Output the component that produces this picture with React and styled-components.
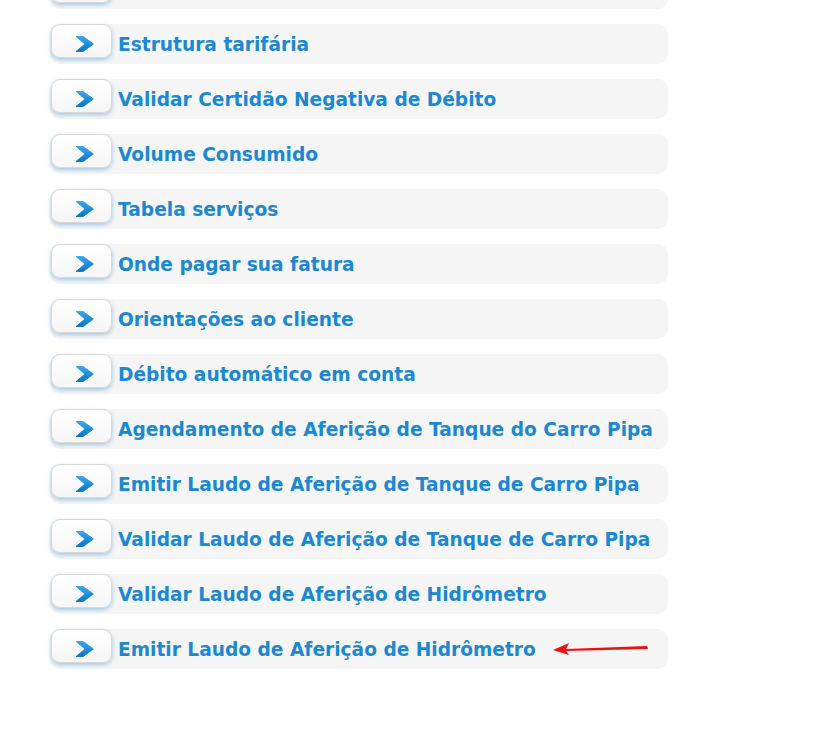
import React from "react";
import styled, { createGlobalStyle } from "styled-components";

const Global = createGlobalStyle`
  html, body { margin: 0; padding: 0; background: #fff; }
  body { font-family: "DejaVu Sans", Verdana, sans-serif; overflow: hidden; }
`;

const Page = styled.div`
  width: 828px;
  height: 743px;
  overflow: hidden;
  background: #fff;
`;

const List = styled.ul`
  list-style: none;
  margin: -31px 0 0 50px;
  padding: 0;
  width: 618px;
  display: flex;
  flex-direction: column;
  gap: 15px;
`;

const Row = styled.li`
  height: 40px;
  background: #f5f5f5;
  border-radius: 10px;
  display: flex;
  align-items: center;
  gap: 6px;
`;

const Btn = styled.span`
  flex: none;
  align-self: flex-start;
  box-sizing: border-box;
  width: 61px;
  height: 34px;
  margin-left: 1px;
  background: linear-gradient(#ffffff, #f6f6f6);
  border: 1px solid #d8d8d8;
  border-radius: 9px;
  box-shadow: 0 2px 4px rgba(110, 170, 215, 0.6);
  display: flex;
  align-items: center;
  justify-content: center;
  padding: 6px 0 0 6px;
`;

const Label = styled.a`
  color: #1a88d2;
  font-weight: bold;
  font-size: 18.6px;
  text-decoration: none;
  white-space: nowrap;
  margin-top: 1px;
`;

const Pointer = styled.svg`
  margin-left: 11px;
  flex: none;
`;

const items = [
  "",
  "Estrutura tarifária",
  "Validar Certidão Negativa de Débito",
  "Volume Consumido",
  "Tabela serviços",
  "Onde pagar sua fatura",
  "Orientações ao cliente",
  "Débito automático em conta",
  "Agendamento de Aferição de Tanque do Carro Pipa",
  "Emitir Laudo de Aferição de Tanque de Carro Pipa",
  "Validar Laudo de Aferição de Tanque de Carro Pipa",
  "Validar Laudo de Aferição de Hidrômetro",
  "Emitir Laudo de Aferição de Hidrômetro",
];

const Chevron = () => (
  <svg width="21" height="16" viewBox="0 0 21 17">
    <defs>
      <linearGradient id="cg" x1="0" y1="0" x2="0" y2="1">
        <stop offset="0" stopColor="#3aa6ea" />
        <stop offset="1" stopColor="#0a76c6" />
      </linearGradient>
    </defs>
    <path d="M1.5 0.5 L9 0.5 L20 8.5 L9 16.5 L1.5 16.5 L11 8.5 Z" fill="url(#cg)" strokeLinejoin="round" stroke="url(#cg)" strokeWidth="1" />
  </svg>
);

export default function App() {
  return (
    <Page>
      <Global />
      <List>
        {items.map((t, i) => (
          <Row key={i}>
            <Btn>
              <Chevron />
            </Btn>
            <Label href="#">{t}</Label>
            {i === items.length - 1 && (
              <Pointer width="96" height="12" viewBox="0 0 96 12">
                <polygon points="0,7 16,0 13,6 94,3 95,6 13,8 16,12" fill="#ee1111" />
              </Pointer>
            )}
          </Row>
        ))}
      </List>
    </Page>
  );
}
